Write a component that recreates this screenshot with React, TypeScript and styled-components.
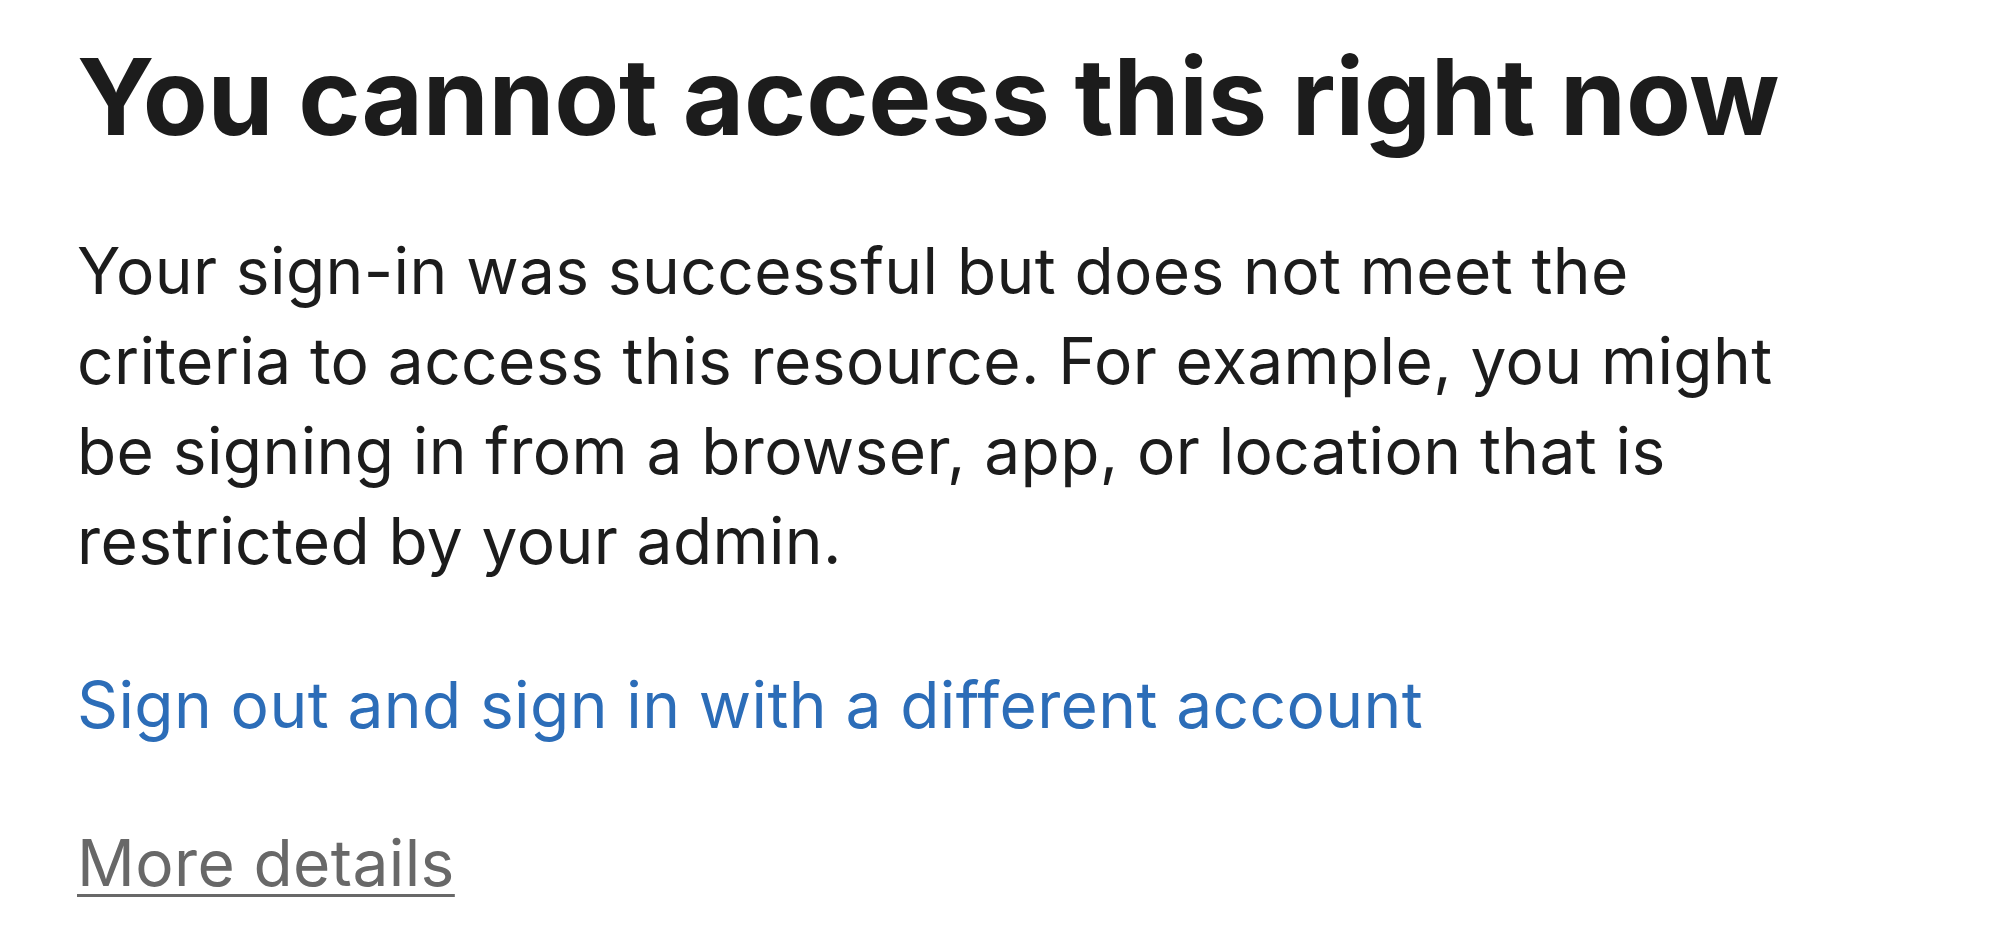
import { FC } from 'react';
import styled, { createGlobalStyle } from 'styled-components';

const GlobalStyle = createGlobalStyle`
  html, body {
    margin: 0;
    padding: 0;
    background: #fff;
  }
  body {
    font-family: Inter, "Liberation Sans", Arial, sans-serif;
    color: #1b1b1b;
  }
`;

const App: FC = () => {
  return (
    <>
      <GlobalStyle />
      <Page>
        <Title>You cannot access this right now</Title>
        <Message>
          Your sign-in was successful but does not meet the
          <br />
          criteria to access this resource. For example, you might
          <br />
          be signing in from a browser, app, or location that is
          <br />
          restricted by your admin.
        </Message>
        <Actions>
          <SignOutLink href="#">Sign out and sign in with a different account</SignOutLink>
          <DetailsLink href="#">More details</DetailsLink>
        </Actions>
      </Page>
    </>
  );
};

export default App;

const Page = styled.main`
  display: flex;
  flex-direction: column;
  align-items: flex-start;
  padding: 33px 0 0 77px;
`;

const Title = styled.h1`
  margin: 0;
  font-family: Inter, "Liberation Sans", Arial, sans-serif;
  font-weight: 700;
  font-size: 106px;
  line-height: 128px;
  color: #1c1c1c;
  letter-spacing: -0.2px;
`;

const Message = styled.p`
  margin: 65px 0 0;
  font-size: 64px;
  line-height: 90px;
  letter-spacing: 0.4px;
  color: #1c1c1c;
`;

const Actions = styled.div`
  display: flex;
  flex-direction: column;
  align-items: flex-start;
  gap: 68px;
  margin-top: 74px;
`;

const SignOutLink = styled.a`
  font-size: 64px;
  line-height: 90px;
  letter-spacing: 0.4px;
  color: #2c6db8;
  text-decoration: none;
`;

const DetailsLink = styled.a`
  font-size: 64px;
  line-height: 90px;
  letter-spacing: 0.4px;
  color: #686868;
  text-decoration: underline;
  text-decoration-thickness: 3px;
  text-underline-offset: 8px;
`;
